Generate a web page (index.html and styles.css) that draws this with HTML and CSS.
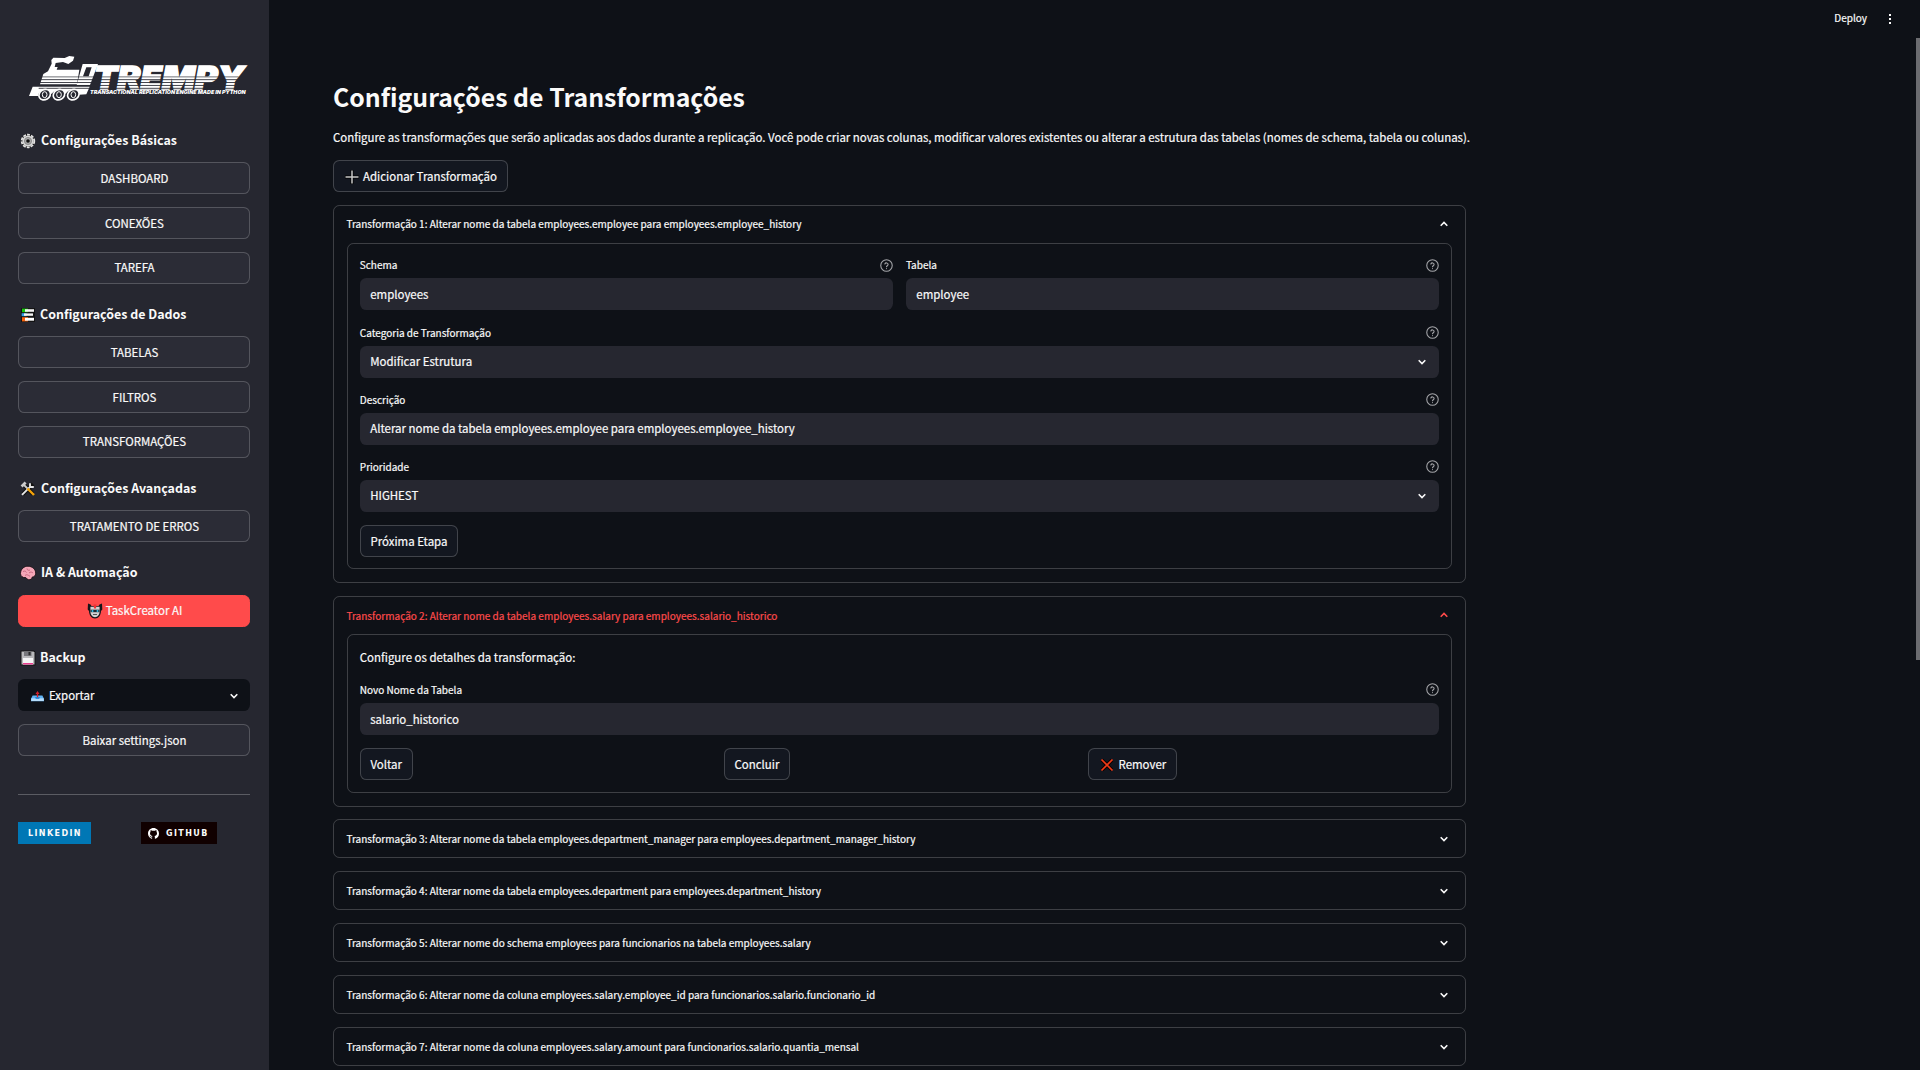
FILE: index.html
```html
<!DOCTYPE html>
<html lang="pt-BR">
<head>
<meta charset="utf-8">
<title>Trempy</title>
<link rel="stylesheet" href="styles.css">
</head>
<body>
<svg class="defs" aria-hidden="true">
  <symbol id="help" viewBox="0 0 24 24"><g fill="none" stroke="currentColor" stroke-width="2" stroke-linecap="round" stroke-linejoin="round"><circle cx="12" cy="12" r="10.6"/><path d="M9 9.2a3.1 3.1 0 0 1 6 1c0 2-3 2.4-3 4.2"/><path d="M12 17.6v.1"/></g></symbol>
  <symbol id="chev" viewBox="0 0 8 8"><path d="M0.7 2.2 4 5.5 7.3 2.2" fill="none" stroke="currentColor" stroke-width="1.6"/></symbol>
</svg>

<div class="app">
  <aside class="sidebar">
    <svg class="logo" viewBox="0 0 690 180">
      <defs>
        <pattern id="stripes" width="20" height="8.6" y="79" patternUnits="userSpaceOnUse"><rect width="20" height="2.6" fill="#262730"/></pattern>
      </defs>
      <g fill="#fff">
        <path d="M82 30 88 23l34 1 14-6 15 2-4 12-14 10-16-6-22 3-3 12h9l-3 8h68l-7 44H48L58 72l14-8 11-23z"/>
        <path fill-rule="evenodd" d="M176 42h46l-24 63h-40zM187 52l-10 27h17l9-27z"/>
        <path d="M26 110h171l-10 23-22 1q-8-18-23-15-10 1-17 13-8-14-22-13-12 1-20 13-10-14-24-13-14 2-17 19H15z"/>
      </g>
      <text class="logo-name" x="209" y="116" textLength="452" lengthAdjust="spacingAndGlyphs">TREMPY</text>
      <rect x="44" y="79" width="600" height="38" fill="url(#stripes)"/>
      <g fill="#262730" stroke="#fff" stroke-width="5">
        <ellipse cx="62" cy="134" rx="18" ry="15" transform="rotate(-30 62 134)"/><ellipse cx="105" cy="134" rx="18" ry="15" transform="rotate(-30 105 134)"/><ellipse cx="148" cy="134" rx="18" ry="15" transform="rotate(-30 148 134)"/>
      </g>
      <g fill="none" stroke="#fff" stroke-width="3"><ellipse cx="62" cy="134" rx="7" ry="9"/><ellipse cx="105" cy="134" rx="7" ry="9"/><ellipse cx="148" cy="134" rx="7" ry="9"/></g>
      <text class="logo-tag" x="198" y="133" textLength="467" lengthAdjust="spacingAndGlyphs">TRANSACTIONAL REPLICATION ENGINE MADE IN PYTHON</text>
    </svg>

    <section class="group">
      <h2><svg class="emo" viewBox="0 0 16 16"><circle cx="8" cy="8" r="7" fill="#111"/><circle cx="8" cy="8" r="6.300" fill="none" stroke="#e4e4e4" stroke-width="1.800" stroke-dasharray="2.900 1.100"/><circle cx="8" cy="8" r="5.600" fill="#d8d8d8"/><circle cx="8" cy="8" r="3.600" fill="#aaa" stroke="#777" stroke-width=".7"/><circle cx="8" cy="8" r="1.800" fill="#111"/></svg>Configurações Básicas</h2>
      <button class="btn">DASHBOARD</button>
      <button class="btn">CONEXÕES</button>
      <button class="btn">TAREFA</button>
    </section>
    <section class="group">
      <h2 class="tight"><svg class="emo" viewBox="0 0 16 16"><path d="M1 1h14v14H1z" fill="#141414"/><path d="M2 1.6h6v3.6H2z" fill="#16c60c"/><path d="M5 2.2h9v2.6H5z" fill="#f4f4f4"/><path d="M1.6 6.2h5v3H1.6z" fill="#2ea0e8"/><path d="M4 6.4h9v2.4H4z" fill="#f4f4f4"/><path d="M2 10.2h6v4.2H2z" fill="#f7630c"/><path d="M5 10.8h9v2.9H5z" fill="#fff"/></svg>Configurações de Dados</h2>
      <button class="btn">TABELAS</button>
      <button class="btn">FILTROS</button>
      <button class="btn">TRANSFORMAÇÕES</button>
    </section>
    <section class="group">
      <h2><svg class="emo" viewBox="0 0 16 16"><g fill="none" stroke="#111" stroke-width="4"><path d="M3 3l10 10M13 3 3 13"/></g><path d="M2 13.8 10.5 5.3M10 2.2 10 5.8 13.8 6" fill="none" stroke="#e6e6e6" stroke-width="1.9"/><path d="M1.6 5.4 5.6 1.6" stroke="#ccc" stroke-width="2.8"/><path d="M4 4 8 8" stroke="#ccc" stroke-width="1.8"/><path d="M7.5 7.5 14 14" stroke="#f5a30a" stroke-width="2.4"/></svg>Configurações Avançadas</h2>
      <button class="btn">TRATAMENTO DE ERROS</button>
    </section>
    <section class="group">
      <h2><svg class="emo" viewBox="0 0 16 16"><path d="M.5 8.500C.5 4.200 4.200 1 8 1.200c4.300 0 7.700 3.300 7.700 7 0 2.600-1.600 3.800-3.400 3.800-.4 2.100-1.900 2.900-3.700 2.700-1.400-.2-2-1.400-2.800-2.100C2.700 13 .5 11.200.5 8.500z" fill="#f4a6b7" stroke="#1a1014" stroke-width=".9"/><path d="M3 6.500c2-1 3 0 3.500 1M7 3.500c0 2 2 2 3 1.500M9 8c1.500-1.500 3-1 4 0M5 10.500c1.500-1.500 3-.5 5 .8" fill="none" stroke="#c4627a" stroke-width=".9"/></svg>IA &amp; Automação</h2>
      <button class="btn primary"><svg class="emo" viewBox="0 0 16 16"><path d="M1 .5 3.500 1.500 4.500 3h7l1-1.500L15 .5l.3 6-1.300 1.500c0 4-2.500 7.500-6 7.500S2 12 2 8L.7 6.500z" fill="#16161a"/><path d="M3.400 3.800h9.200v5c0 2.800-2 5.400-4.600 5.400s-4.600-2.600-4.600-5.400z" fill="#d2d2d2"/><path d="M6.500 1.500h3l-.5 4H7z" fill="#e33"/><path d="M3.500 6.700h9v2.500h-9z" fill="#1c2b33"/><circle cx="5.500" cy="7.900" r="1" fill="#31c8f0"/><circle cx="10.500" cy="7.900" r="1" fill="#31c8f0"/><path d="M6 11.500h4" stroke="#555"/></svg>TaskCreator AI</button>
    </section>
    <section class="group">
      <h2 class="tight"><svg class="emo" viewBox="0 0 16 16"><path d="M.5.5H14L15.500 2v13.500H.5z" fill="#121212"/><path d="M1.500 1.500H13.500L14.500 2.500v12h-13z" fill="#b9b9bb"/><path d="M4 1.500h7.500V6H4z" fill="#77777b"/><path d="M8.500 2h2v3.200h-2z" fill="#2b2b2b"/><path d="M3 8h10v6.500H3z" fill="#f5f5f5"/><path d="M3 13h10v1.500H3z" fill="#ea3d8f"/></svg>Backup</h2>
      <div class="select dark"><svg class="emo sm" viewBox="0 0 16 16"><path d="M2 8h12l2 4v3H0v-3z" fill="#5fb2f2"/><path d="M.3 11.500h15.400v3.300H.3z" fill="#b5dcfa"/><path d="M5 10h6l-1 2H6z" fill="#1377d1"/><path d="M8 2.500 10.500 6h-1.700v4H7.200V6H5.500z" fill="#d3202c"/></svg><span>Exportar</span><svg class="chev"><use href="#chev"/></svg></div>
      <button class="btn">Baixar settings.json</button>
    </section>
    <hr>
    <div class="badges">
      <a class="badge linkedin">LINKEDIN</a>
      <a class="badge github"><svg viewBox="0 0 16 16"><path fill="#fff" d="M8 0C3.580 0 0 3.580 0 8c0 3.540 2.290 6.530 5.470 7.590.4.070.55-.17.55-.38 0-.19-.01-.82-.01-1.490-2.010.37-2.530-.49-2.690-.94-.09-.23-.48-.94-.82-1.130-.28-.15-.68-.52-.01-.53.63-.01 1.080.58 1.230.82.72 1.210 1.870.87 2.330.66.070-.52.28-.87.51-1.070-1.780-.2-3.640-.89-3.640-3.950 0-.87.31-1.590.82-2.150-.08-.2-.36-1.020.08-2.120 0 0 .67-.21 2.200.82a7.600 7.600 0 0 1 4 0c1.530-1.040 2.200-.82 2.200-.82.44 1.100.16 1.920.08 2.120.51.56.82 1.270.82 2.150 0 3.070-1.870 3.750-3.650 3.950.29.25.54.73.54 1.480 0 1.070-.01 1.930-.01 2.200 0 .21.15.46.55.38A8 8 0 0 0 16 8c0-4.420-3.580-8-8-8z"/></svg>GITHUB</a>
    </div>
  </aside>

  <div class="view">
    <header class="toolbar"><span>Deploy</span><svg viewBox="0 0 4 12"><path fill="#fafafa" d="M1 1h2v2H1zM1 5h2v2H1zM1 9h2v2H1z"/></svg></header>
    <main class="content">
      <h1>Configurações de Transformações</h1>
      <p class="lead">Configure as transformações que serão aplicadas aos dados durante a replicação. Você pode criar novas colunas, modificar valores existentes ou alterar a estrutura das tabelas (nomes de schema, tabela ou colunas).</p>
      <button class="btn add"><svg class="emo" viewBox="0 0 16 16"><path d="M8 1v14M1 8h14" stroke="#000" stroke-width="3"/><path d="M8 1.500v13M1.500 8h13" stroke="#c8c8c8" stroke-width="1.500"/></svg>Adicionar Transformação</button>

      <section class="expander open">
        <div class="summary"><span>Transformação 1: Alterar nome da tabela employees.employee para employees.employee_history</span><svg class="chev up"><use href="#chev"/></svg></div>
        <div class="form">
          <div class="cols two">
            <div class="field"><label>Schema<svg class="help"><use href="#help"/></svg></label><div class="input">employees</div></div>
            <div class="field"><label>Tabela<svg class="help"><use href="#help"/></svg></label><div class="input">employee</div></div>
          </div>
          <div class="field"><label>Categoria de Transformação<svg class="help"><use href="#help"/></svg></label><div class="select"><span>Modificar Estrutura</span><svg class="chev"><use href="#chev"/></svg></div></div>
          <div class="field"><label>Descrição<svg class="help"><use href="#help"/></svg></label><div class="input">Alterar nome da tabela employees.employee para employees.employee_history</div></div>
          <div class="field"><label>Prioridade<svg class="help"><use href="#help"/></svg></label><div class="select"><span>HIGHEST</span><svg class="chev"><use href="#chev"/></svg></div></div>
          <button class="btn">Próxima Etapa</button>
        </div>
      </section>

      <section class="expander open">
        <div class="summary hover"><span>Transformação 2: Alterar nome da tabela employees.salary para employees.salario_historico</span><svg class="chev up"><use href="#chev"/></svg></div>
        <div class="form">
          <p class="note">Configure os detalhes da transformação:</p>
          <div class="field"><label>Novo Nome da Tabela<svg class="help"><use href="#help"/></svg></label><div class="input">salario_historico</div></div>
          <div class="cols three">
            <button class="btn">Voltar</button>
            <button class="btn">Concluir</button>
            <button class="btn remove"><svg class="emo" viewBox="0 0 16 16"><path d="M3 3l10 10M13 3 3 13" stroke="#100" stroke-width="3.600"/><path d="M2.500 2.500l11 11M13.500 2.500l-11 11" stroke="#f03a17" stroke-width="1.700"/></svg>Remover</button>
          </div>
        </div>
      </section>

      <section class="expander"><div class="summary"><span>Transformação 3: Alterar nome da tabela employees.department_manager para employees.department_manager_history</span><svg class="chev"><use href="#chev"/></svg></div></section>
      <section class="expander"><div class="summary"><span>Transformação 4: Alterar nome da tabela employees.department para employees.department_history</span><svg class="chev"><use href="#chev"/></svg></div></section>
      <section class="expander"><div class="summary"><span>Transformação 5: Alterar nome do schema employees para funcionarios na tabela employees.salary</span><svg class="chev"><use href="#chev"/></svg></div></section>
      <section class="expander"><div class="summary"><span>Transformação 6: Alterar nome da coluna employees.salary.employee_id para funcionarios.salario.funcionario_id</span><svg class="chev"><use href="#chev"/></svg></div></section>
      <section class="expander"><div class="summary"><span>Transformação 7: Alterar nome da coluna employees.salary.amount para funcionarios.salario.quantia_mensal</span><svg class="chev"><use href="#chev"/></svg></div></section>
    </main>
    <div class="scrollbar"></div>
  </div>
</div>
</body>
</html>
```
FILE: styles.css
```css
* { box-sizing: border-box; }
html, body { height: 100%; }
body {
  margin: 0;
  overflow: hidden;
  background: #0e1117;
  color: #fafafa;
  font: 11.46px/19.6px "Noto Sans CJK SC", "Source Sans Pro", sans-serif;
  -webkit-text-stroke: 0.2px currentColor;
}
h1, h2, p { margin: 0; }
h1, h2, .badge, .logo { -webkit-text-stroke: 0; }
svg { display: block; flex: none; }
.defs { position: absolute; width: 0; height: 0; }
.app { display: flex; height: 1070px; }

/* Sidebar */
.sidebar {
  width: 269px;
  flex: none;
  padding: 50px 19px 0 18px;
  background: #262730;
}
.logo { width: 230px; height: 60px; margin: 0 0 20px 6px; overflow: visible; }
.logo-name { font: italic 900 94px/1 Inter, "Liberation Sans", sans-serif; fill: #fff; stroke: #fff; stroke-width: 4; }
.logo-tag { font: italic 900 15px/1 Inter, "Liberation Sans", sans-serif; fill: #fff; }
.group { display: flex; flex-direction: column; gap: 12.8px; margin-bottom: 20.5px; }
.group h2 {
  display: flex;
  align-items: center;
  gap: 5px;
  height: 20px;
  margin-bottom: -0.8px;
  padding: 1px 0 0 2px;
  font-size: 12.45px;
  font-weight: 700;
  white-space: nowrap;
}
.group h2.tight { gap: 4px; }
.emo { width: 16px; height: 16px; overflow: visible; }
.emo.sm { width: 13px; height: 13px; margin-right: 5px; }

.btn {
  display: flex;
  align-items: center;
  justify-content: center;
  height: 32px;
  padding: 1.2px 9.6px 0;
  border: 1px solid rgba(250, 250, 250, 0.2);
  border-radius: 6.4px;
  background: #131720;
  color: #fafafa;
  font: inherit;
  white-space: nowrap;
}
.sidebar .btn { background: #2b2c36; padding-left: 10.6px; }
.sidebar .btn.primary { gap: 3px; background: #ff4b4b; border-color: #ff4b4b; }

.input, .select {
  display: flex;
  align-items: center;
  height: 32px;
  padding: 0.6px 10.4px 0;
  border-radius: 6.4px;
  background: #262730;
}
.select span { flex: 1; }
.select .chev { margin-right: 3px; }
.select.dark { background: #0e1117; padding: 1.2px 10.4px 0 13px; }
.select.dark .chev { margin-right: 2px; }
.chev { width: 8px; height: 8px; }
.chev.up { transform: rotate(180deg); }

.sidebar hr { margin: 38.5px 0 27px; border: 0; border-top: 1px solid rgba(250, 250, 250, 0.25); }
.badges { display: grid; grid-template-columns: 1fr 1fr; gap: 14px; }
.badge {
  display: flex;
  align-items: center;
  justify-self: start;
  height: 22px;
  padding-top: 1px;
  font: bold 8px/22px "DejaVu Sans", Verdana, sans-serif;
  letter-spacing: 1.4px;
}
.linkedin { width: 73px; padding-left: 10px; background: #0077b5; }
.github { width: 76px; padding-left: 7px; gap: 7px; background: #100000; }
.github svg { width: 11px; height: 11px; }

/* Main view */
.view { position: relative; flex: 1; overflow: hidden; }
.toolbar {
  display: flex;
  align-items: center;
  justify-content: flex-end;
  gap: 21px;
  height: 37px;
  padding-right: 28px;
  font-size: 10.03px;
}
.toolbar span { padding-bottom: 1px; }
.toolbar svg { width: 4px; height: 12px; }
.scrollbar { position: absolute; top: 38px; right: 0; width: 4px; height: 622px; background: #6b6c70; }
.content {
  display: flex;
  flex-direction: column;
  gap: 12.8px;
  width: 1133px;
  margin-left: 64px;
  padding-top: 40px;
}
h1 { height: 38px; font-size: 24.83px; line-height: 38px; font-weight: 700; white-space: nowrap; }
.lead { height: 19.6px; white-space: nowrap; }
.btn.add { align-self: flex-start; width: 175px; gap: 3px; padding-left: 9.6px; }

.expander { border: 1px solid rgba(250, 250, 250, 0.2); border-radius: 6.4px; flex: none; }
.summary {
  display: flex;
  align-items: center;
  justify-content: space-between;
  height: 37.1px;
  padding: 0 17px 0 12.5px;
  font-size: 10.04px;
}
.summary.hover { color: #ff4b4b; }
.open { padding-bottom: 13px; }
.open .summary { height: 37.2px; padding-bottom: 1px; }
.form {
  display: flex;
  flex-direction: column;
  align-items: stretch;
  gap: 12.8px;
  margin: 0 12.8px;
  padding: 11.8px 12px;
  border: 1px solid rgba(250, 250, 250, 0.2);
  border-radius: 6.4px;
}
.form .btn { align-self: flex-start; justify-self: start; padding-top: 1.6px; }
.cols { display: grid; gap: 12.8px; }
.cols.two { grid-template-columns: 1fr 1fr; }
.cols.three { grid-template-columns: repeat(3, 1fr); }
.note { height: 20.6px; padding-top: 1.2px; }
.field label {
  display: flex;
  align-items: center;
  justify-content: space-between;
  height: 19.2px;
  margin-bottom: 3.2px;
  padding-bottom: 0.6px;
  font-size: 10.03px;
}
.help { width: 13px; height: 13px; color: #a3a4a8; }
.btn.remove { gap: 4px; }
```
